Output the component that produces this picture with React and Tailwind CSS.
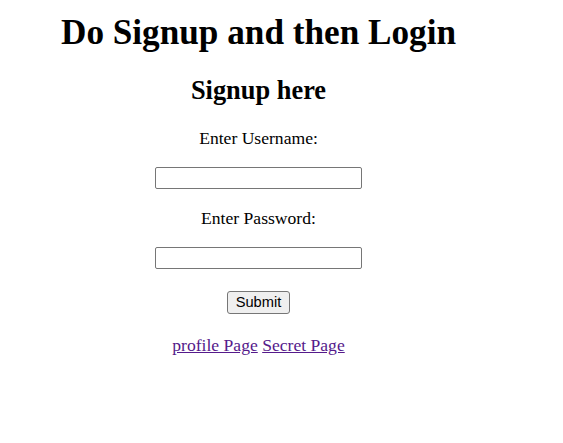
export default function App() {
  return (
    <div className="min-h-[443px] bg-white text-black" style={{ fontFamily: '"Liberation Serif", serif' }}>
      <div className="w-[501px] ml-2 flex flex-col items-center text-center">
        <h1 className="mt-[13px] text-[35.2px] font-bold leading-[40px]">Do Signup and then Login</h1>
        <h2 className="mt-[22px] text-[26.4px] font-bold leading-[30px]">Signup here</h2>
        <p className="mt-[23px] text-[17.6px] leading-[20px]">Enter Username:</p>
        <input
          type="text"
          className="mt-[19px] w-[207px] h-[22px] border border-[#767676] rounded-[2px] bg-white px-[2px] text-[14px]"
        />
        <p className="mt-[19px] text-[17.6px] leading-[20px]">Enter Password:</p>
        <input
          type="password"
          className="mt-[19px] w-[207px] h-[22px] border border-[#767676] rounded-[2px] bg-white px-[2px] text-[14px]"
        />
        <button
          className="mt-[22px] h-[23px] px-[8px] border border-[#767676] rounded-[3px] bg-[#efefef] text-[14.67px] leading-[17px] text-black"
          style={{ fontFamily: '"Liberation Sans", Arial, sans-serif' }}
        >
          Submit
        </button>
        <div className="mt-[21px] text-[17.6px] leading-[20px]">
          <a href="#" className="text-[#551a8b] underline">profile Page</a>{" "}
          <a href="#" className="text-[#551a8b] underline">Secret Page</a>
        </div>
      </div>
    </div>
  );
}
